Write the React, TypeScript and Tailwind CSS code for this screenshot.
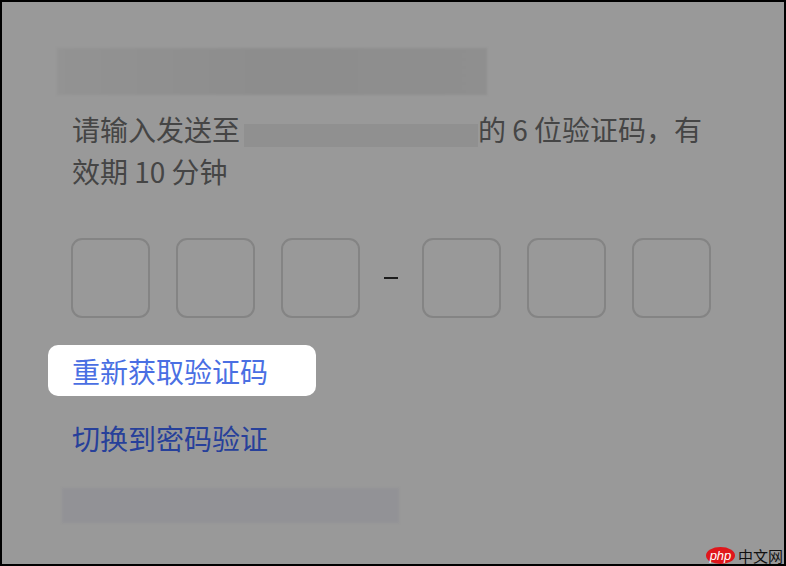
import React from "react";

const FONT = '"Noto Sans CJK SC", "Noto Sans", sans-serif';

function CodeBox() {
  return <div className="w-[79px] h-[80px] rounded-[11px] border-2 border-[#848484]" />;
}

export default function App() {
  return (
    <div
      className="w-[786px] h-[566px] border-2 border-black bg-[#999999] relative overflow-hidden flex flex-col"
      style={{ fontFamily: FONT }}
    >
      {/* blurred title */}
      <div className="ml-[55px] mt-[46px] w-[430px] h-[47px] bg-gradient-to-r from-[#939393] via-[#8d8d8d] to-[#8f8f8f] blur-[1px]" />

      <p className="ml-[70px] mt-[13px] w-[640px] text-[28px] leading-[42px] text-[#454545]">
        请输入发送至
        <span className="inline-block align-[-6px] ml-[4px] w-[234px] h-[23px] bg-[#909090]" />
        的 6 位验证码，有
        <br />
        效期 10 分钟
      </p>

      <div className="ml-[69px] mt-[46px] flex items-center">
        <div className="flex gap-[26px]">
          <CodeBox />
          <CodeBox />
          <CodeBox />
        </div>
        <div className="w-[14px] h-[2px] bg-[#1c1c1c] mx-[24px]" />
        <div className="flex gap-[26px]">
          <CodeBox />
          <CodeBox />
          <CodeBox />
        </div>
      </div>

      <div className="ml-[46px] mt-[27px] w-[268px] h-[51px] rounded-[10px] bg-white flex items-center pl-[24px]">
        <span className="text-[28px] leading-none text-[#4a6fe3]">重新获取验证码</span>
      </div>

      <div className="ml-[70px] mt-[21px] text-[28px] leading-[42px] text-[#27409a]">切换到密码验证</div>

      <div className="ml-[60px] mt-[29px] w-[337px] h-[35px] bg-[#929296] blur-[1px]" />

      {/* watermark */}
      <div className="absolute right-[1px] bottom-[0px] flex items-center gap-[3px]">
        <div className="w-[29px] h-[17px] rounded-[50%] bg-[#e0161b] flex items-center justify-center">
          <span className="text-[13px] leading-none italic text-white" style={{ fontFamily: '"Liberation Sans", sans-serif' }}>
            php
          </span>
        </div>
        <span className="text-[15px] leading-none text-[#111]">中文网</span>
      </div>
    </div>
  );
}
